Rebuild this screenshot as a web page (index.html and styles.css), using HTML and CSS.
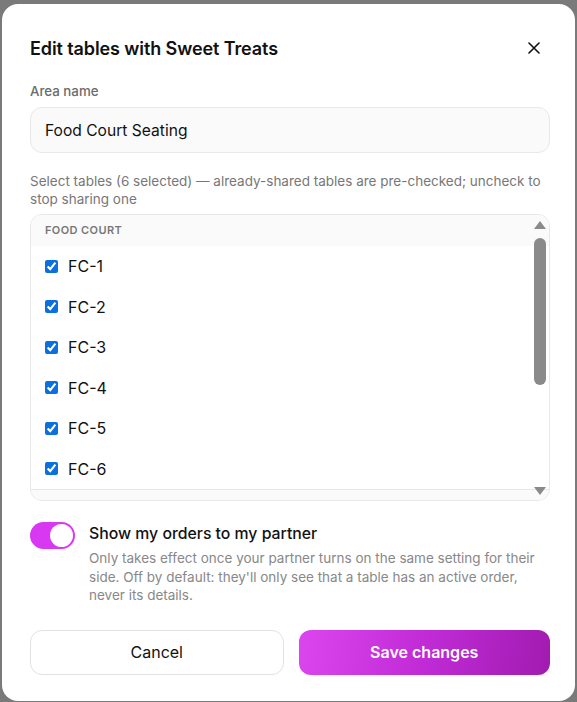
FILE: index.html
```html
<!DOCTYPE html>
<html lang="en">
<head>
  <meta charset="UTF-8">
  <meta name="viewport" content="width=device-width, initial-scale=1.0">
  <title>Edit tables</title>
  <link rel="stylesheet" href="styles.css">
</head>
<body>
  <div class="modal">
    <div class="modal-head">
      <h2>Edit tables with Sweet Treats</h2>
      <button class="close" aria-label="Close">
        <svg width="12" height="12" viewBox="0 0 12 12"><path d="M1 1L11 11M11 1L1 11" stroke="#111" stroke-width="1.6" stroke-linecap="round"/></svg>
      </button>
    </div>

    <label class="field-label" for="area">Area name</label>
    <input id="area" class="text-input" type="text" value="Food Court Seating">

    <p class="hint">Select tables (6 selected) — already-shared tables are pre-checked; uncheck to stop sharing one</p>

    <div class="list-wrap">
      <div class="table-list">
        <div class="group-title">Food Court</div>
        <label class="row"><input type="checkbox" checked> FC-1</label>
        <label class="row"><input type="checkbox" checked> FC-2</label>
        <label class="row"><input type="checkbox" checked> FC-3</label>
        <label class="row"><input type="checkbox" checked> FC-4</label>
        <label class="row"><input type="checkbox" checked> FC-5</label>
        <label class="row"><input type="checkbox" checked> FC-6</label>
        <div class="group-title">Patio</div>
        <label class="row"><input type="checkbox"> P-1</label>
        <label class="row"><input type="checkbox"> P-2</label>
        <label class="row"><input type="checkbox"> P-3</label>
        <label class="row"><input type="checkbox"> P-4</label>
      </div>
      <div class="scrollbar">
        <span class="arrow-up"></span>
        <span class="thumb"></span>
        <span class="arrow-down"></span>
      </div>
    </div>

    <div class="share">
      <span class="toggle"><span class="knob"></span></span>
      <div>
        <div class="share-title">Show my orders to my partner</div>
        <p class="share-desc">Only takes effect once your partner turns on the same setting for their side. Off by default: they'll only see that a table has an active order, never its details.</p>
      </div>
    </div>

    <div class="actions">
      <button class="btn btn-cancel">Cancel</button>
      <button class="btn btn-save">Save changes</button>
    </div>
  </div>
</body>
</html>
```

FILE: styles.css
```css
body {
  margin: 0;
  background-color: #7a7a7a;
  font-family: 'Inter', 'Noto Sans', sans-serif;
  color: #111;
}

.modal {
  box-sizing: border-box;
  width: 573px;
  margin: 4px 0 0 2px;
  height: 697px;
  background-color: #fff;
  border-radius: 16px;
  padding: 32px 25px 25px 28px;
}

.modal-head {
  display: flex;
  justify-content: space-between;
  align-items: center;
  height: 24px;
}

h2 {
  margin: 0;
  font-size: 18px;
  font-weight: 600;
  letter-spacing: -0.1px;
}

.close {
  border: none;
  background: none;
  padding: 0;
  width: 24px;
  height: 24px;
  display: flex;
  align-items: center;
  justify-content: center;
  margin-right: 4px;
}

.field-label {
  display: block;
  margin-top: 22px;
  font-size: 13.3px;
  line-height: 18px;
  color: #6b6b6b;
  font-weight: 500;
}

.text-input {
  box-sizing: border-box;
  display: block;
  width: 100%;
  height: 46px;
  margin-top: 7px;
  padding: 0 14px;
  border: 1px solid #e8e8e8;
  border-radius: 12px;
  background-color: #fafafa;
  font-family: inherit;
  font-size: 15.6px;
  color: #111;
}

.hint {
  margin: 19px 0 0;
  font-size: 13.5px;
  line-height: 18px;
  color: #777;
}

.list-wrap {
  position: relative;
  margin-top: 6px;
}

.table-list {
  box-sizing: border-box;
  height: 287px;
  border: 1px solid #e8e8e8;
  border-radius: 12px;
  overflow: hidden;
}

/* scrollbar drawn over the list */
.scrollbar {
  position: absolute;
  top: 0;
  bottom: 0;
  right: 4px;
  width: 13px;
  display: flex;
  flex-direction: column;
  align-items: center;
}

.arrow-up,
.arrow-down {
  width: 0;
  height: 0;
  border-left: 6px solid transparent;
  border-right: 6px solid transparent;
}

.arrow-up {
  margin-top: 7px;
  border-bottom: 8px solid #8a8a8a;
}

.arrow-down {
  margin-top: auto;
  margin-bottom: 6px;
  border-top: 8px solid #8a8a8a;
}

.thumb {
  margin-top: 9px;
  width: 12px;
  height: 147px;
  border-radius: 6px;
  background-color: #8a8a8a;
}

.group-title {
  height: 31px;
  line-height: 31px;
  padding: 0 14px;
  background-color: #fafafa;
  border-top: 1px solid #e8e8e8;
  font-size: 11px;
  font-weight: 600;
  letter-spacing: 0.4px;
  text-transform: uppercase;
  color: #777;
}

.group-title:first-child {
  border-top: none;
}

.row {
  display: flex;
  align-items: center;
  gap: 10px;
  height: 40.5px;
  padding: 0 14px;
  font-size: 16px;
}

.row input {
  margin: 0;
  width: 13px;
  height: 13px;
  accent-color: #0b6fe0;
}

.share {
  display: flex;
  gap: 14px;
  margin-top: 21px;
}

.toggle {
  flex: none;
  position: relative;
  width: 45px;
  height: 27px;
  border-radius: 14px;
  background-color: #d838f2;
}

.knob {
  position: absolute;
  top: 2px;
  right: 2px;
  width: 23px;
  height: 23px;
  border-radius: 50%;
  background-color: #fff;
}

.share-title {
  font-size: 15.8px;
  font-weight: 500;
  line-height: 22px;
  margin-top: 1px;
}

.share-desc {
  margin: 4px 0 0;
  font-size: 13.5px;
  line-height: 18.5px;
  color: #888;
}

.actions {
  display: flex;
  gap: 15px;
  margin-top: 25px;
}

.btn {
  flex: 1;
  height: 45px;
  border-radius: 12px;
  font-family: inherit;
  font-size: 16px;
}

.btn-cancel {
  background-color: #fff;
  border: 1px solid #e2e2e2;
  color: #111;
}

.btn-save {
  border: none;
  color: #fff;
  font-weight: 600;
  background: linear-gradient(100deg, #dc46ee 0%, #c02bd6 50%, #a11bb0 100%);
}
```
